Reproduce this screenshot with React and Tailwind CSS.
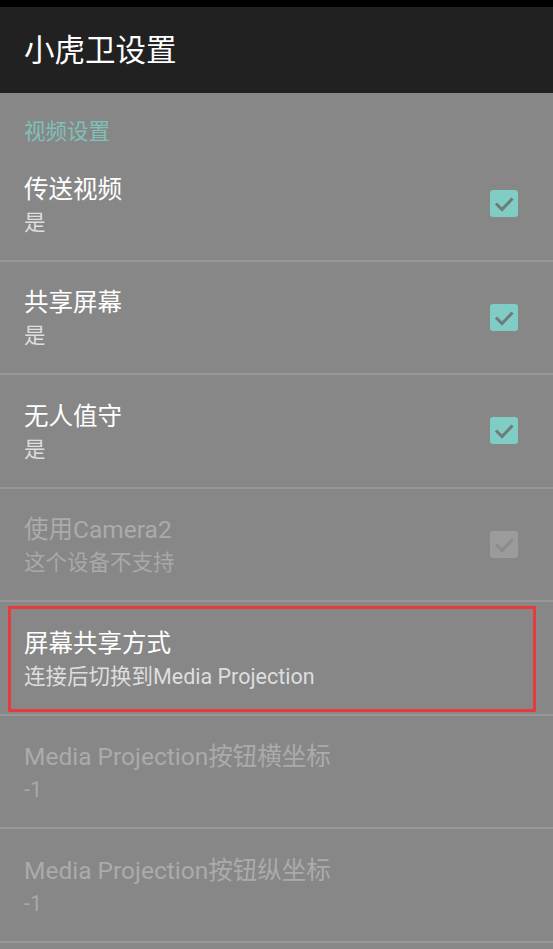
import React from "react";

const FONT = { fontFamily: 'Roboto, "Noto Sans CJK SC", "Noto Sans", sans-serif' };

const PREFS = [
  { title: "传送视频", summary: "是", checked: true },
  { title: "共享屏幕", summary: "是", checked: true },
  { title: "无人值守", summary: "是", checked: true },
  { title: "使用Camera2", summary: "这个设备不支持", checked: true, disabled: true },
  { title: "屏幕共享方式", summary: "连接后切换到Media Projection", marked: true },
  { title: "Media Projection按钮横坐标", summary: "-1", disabled: true },
  { title: "Media Projection按钮纵坐标", summary: "-1", disabled: true },
];

const CheckBox = ({ disabled }) => (
  <div className={`w-[28px] h-[27px] rounded-[3px] flex items-center justify-center ${disabled ? "bg-[#9b9b9b]" : "bg-[#7fcdc5]"}`}>
    <svg width="28" height="27" viewBox="0 0 28 27">
      <path d="M6 13.5 L12 19.5 L22.5 8.5" fill="none" stroke={disabled ? "#8c8c8c" : "#6e7c7a"} strokeWidth="3" />
    </svg>
  </div>
);

const PrefRow = ({ pref }) => (
  <div className="relative h-[113.5px] border-b-2 border-[#989898] flex items-center pl-6 pr-[35px]">
    <div className="flex-1 flex flex-col pt-[4px]">
      <span className={`text-[24.5px] leading-[34px] ${pref.disabled ? "text-[#ababab]" : "text-white"}`}>{pref.title}</span>
      <span className={`text-[21.5px] leading-[32px] ${pref.disabled ? "text-[#a9a9a9]" : "text-[#dedede]"}`}>{pref.summary}</span>
    </div>
    {pref.checked !== undefined && <CheckBox disabled={pref.disabled} />}
    {pref.marked && (
      <div className="absolute top-[4px] left-[8px] right-[17px] bottom-[2px] border-[3px] border-[#e63b3b] pointer-events-none" />
    )}
  </div>
);

export default function App() {
  return (
    <div className="w-[553px] h-[949px] overflow-hidden bg-[#878787] flex flex-col" style={FONT}>
      <div className="h-[7px] bg-black" />
      <div className="h-[86px] bg-[#212121] flex items-center pl-6">
        <span className="text-[30.5px] text-white leading-none pt-[2px]">小虎卫设置</span>
      </div>
      <div className="h-[55px] pl-6 pt-[25px]">
        <span className="block text-[21.5px] leading-[28px] text-[#7fc0b9]">视频设置</span>
      </div>
      {PREFS.map((p) => (
        <PrefRow key={p.title} pref={p} />
      ))}
    </div>
  );
}
